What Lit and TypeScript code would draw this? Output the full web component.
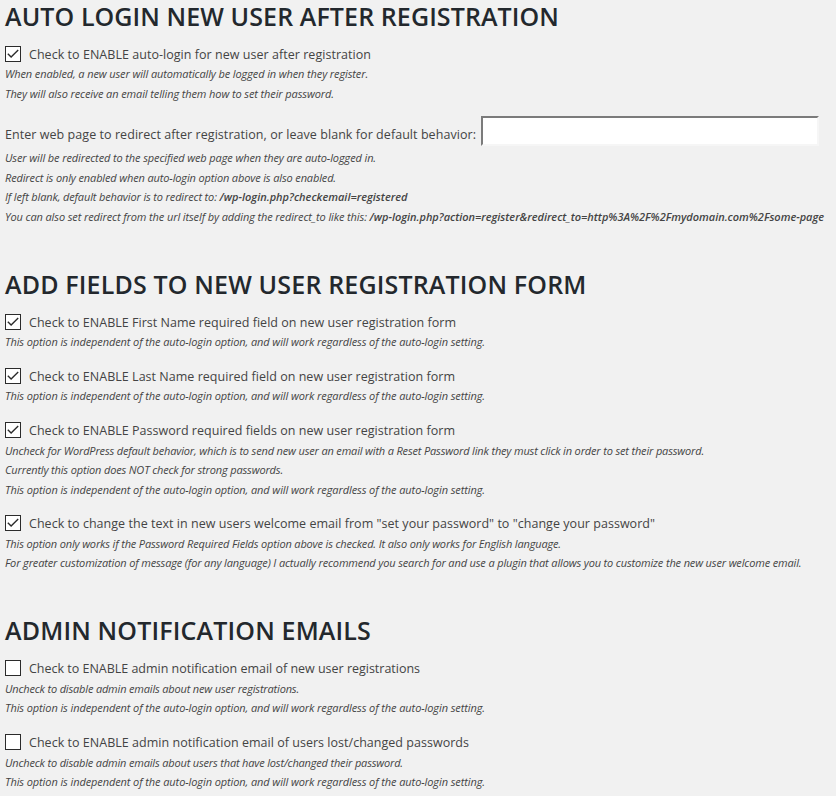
import { LitElement, html, css, svg, nothing } from "lit";
import { customElement, property } from "lit/decorators.js";
import { styleMap } from "lit/directives/style-map.js";

type Line = { text: string; width: number; strong?: string; strongWidth?: number };
type Option = { label: Line; checked?: boolean; input?: boolean; notes: Line[] };
type Section = { title: Line; options: Option[] };

const line = (text: string, width: number, strong?: string, strongWidth?: number): Line => ({
  text, width, strong, strongWidth,
});

const independent = line(
  "This option is independent of the auto-login option, and will work regardless of the auto-login setting.", 480);

const sections: Section[] = [
  {
    title: line("AUTO LOGIN NEW USER AFTER REGISTRATION", 554),
    options: [
      {
        label: line("Check to ENABLE auto-login for new user after registration", 342),
        checked: true,
        notes: [
          line("When enabled, a new user will automatically be logged in when they register.", 363),
          line("They will also receive an email telling them how to set their password.", 329),
        ],
      },
      {
        label: line("Enter web page to redirect after registration, or leave blank for default behavior:", 471),
        input: true,
        notes: [
          line("User will be redirected to the specified web page when they are auto-logged in.", 371),
          line("Redirect is only enabled when auto-login option above is also enabled.", 331),
          line("If left blank, default behavior is to redirect to: ", 214.5, "/wp-login.php?checkemail=registered", 188),
          line("You can also set redirect from the url itself by adding the redirect_to like this: ", 364.5,
            "/wp-login.php?action=register&redirect_to=http%3A%2F%2Fmydomain.com%2Fsome-page", 454.5),
        ],
      },
    ],
  },
  {
    title: line("ADD FIELDS TO NEW USER REGISTRATION FORM", 581.5),
    options: [
      {
        label: line("Check to ENABLE First Name required field on new user registration form", 427),
        checked: true,
        notes: [independent],
      },
      {
        label: line("Check to ENABLE Last Name required field on new user registration form", 426),
        checked: true,
        notes: [independent],
      },
      {
        label: line("Check to ENABLE Password required fields on new user registration form", 426),
        checked: true,
        notes: [
          line("Uncheck for WordPress default behavior, which is to send new user an email with a Reset Password link they must click in order to set their password.", 699),
          line("Currently this option does NOT check for strong passwords.", 278),
          independent,
        ],
      },
      {
        label: line('Check to change the text in new users welcome email from "set your password" to "change your password"', 626),
        checked: true,
        notes: [
          line("This option only works if the Password Required Fields option above is checked. It also only works for English language.", 556),
          line("For greater customization of message (for any language) I actually recommend you search for and use a plugin that allows you to customize the new user welcome email.", 796.5),
        ],
      },
    ],
  },
  {
    title: line("ADMIN NOTIFICATION EMAILS", 366),
    options: [
      {
        label: line("Check to ENABLE admin notification email of new user registrations", 391),
        notes: [line("Uncheck to disable admin emails about new user registrations.", 294), independent],
      },
      {
        label: line("Check to ENABLE admin notification email of users lost/changed passwords", 440),
        notes: [line("Uncheck to disable admin emails about users that have lost/changed their password.", 398), independent],
      },
    ],
  },
];

const fonts = {
  title: '600 25px "Open Sans"',
  label: '12.5px "Open Sans"',
  note: 'italic 11px "Open Sans"',
  strong: 'italic 600 11px "Open Sans"',
};

const ruler = document.createElement("canvas").getContext("2d")!;

// Tracks a run of text so that it fills the given width.
function fitted(text: string, width: number, font: string) {
  ruler.font = font;
  const spacing = (width - ruler.measureText(text).width) / text.length;
  return html`<span style=${styleMap({ letterSpacing: `${spacing.toFixed(3)}px` })}>${text}</span>`;
}

@customElement("check-box")
export class CheckBox extends LitElement {
  @property({ type: Boolean }) checked = false;

  static styles = css`
    :host { display: block; flex: none; width: 16px; height: 16px; }
    svg { display: block; }
    .frame { fill: #fff; stroke: #2b2b2b; stroke-width: 1; }
    .tick { fill: none; stroke: #2b2b2b; stroke-width: 1.35; }
  `;

  render() {
    return html`<svg width="16" height="16" viewBox="0 0 16 16">
      <rect class="frame" x="0.5" y="0.5" width="15" height="15"></rect>
      ${this.checked ? svg`<path class="tick" d="M2.8 7.8 L6.1 11.1 L13.2 4"></path>` : nothing}
    </svg>`;
  }
}

@customElement("app-root")
export class AppRoot extends LitElement {
  static styles = css`
    :host {
      display: block;
      box-sizing: border-box;
      height: 100vh;
      overflow: hidden;
      padding: 0 5px;
      background: #f1f1f1;
      color: #444;
      font-family: "Open Sans", "Noto Sans", sans-serif;
    }
    span { white-space: pre; }
    section { margin-bottom: 41.6px; }
    h2 {
      margin: 0 0 12px;
      color: #23282d;
      font-size: 25px;
      font-weight: 600;
      line-height: 32px;
    }
    .options { display: flex; flex-direction: column; gap: 14.41px; }
    .row {
      display: flex;
      align-items: center;
      gap: 8px;
      height: 20px;
      font-size: 12.5px;
      line-height: 20px;
    }
    .row label { padding-top: 2px; }
    .field { align-items: flex-start; gap: 5px; height: 32px; margin-top: -1.5px; }
    .field label { padding-top: 9px; }
    input {
      box-sizing: border-box;
      width: 338px;
      height: 30px;
      margin: 0;
      padding: 2px 4px;
      border: 2px solid;
      border-color: #7b7b7b #f6f6f6 #f6f6f6 #7b7b7b;
      border-radius: 0;
      background: #fff;
      font: inherit;
      outline: none;
    }
    .notes { padding-top: 0.25px; font-size: 11px; font-style: italic; line-height: 19.5px; white-space: nowrap; }
    section:last-of-type .notes { padding-top: 0.5px; }
    strong { font-weight: 600; }
  `;

  private note(n: Line) {
    return html`<div>${fitted(n.text, n.width, fonts.note)}${n.strong
      ? html`<strong>${fitted(n.strong, n.strongWidth!, fonts.strong)}</strong>` : nothing}</div>`;
  }

  private option(o: Option) {
    const label = html`<label>${fitted(o.label.text, o.label.width, fonts.label)}</label>`;
    return html`<div>
      ${o.input
        ? html`<div class="row field">${label}<input type="text" /></div>`
        : html`<div class="row"><check-box ?checked=${o.checked}></check-box>${label}</div>`}
      <div class="notes">${o.notes.map((n) => this.note(n))}</div>
    </div>`;
  }

  render() {
    return sections.map((s) => html`<section>
      <h2>${fitted(s.title.text, s.title.width, fonts.title)}</h2>
      <div class="options">${s.options.map((o) => this.option(o))}</div>
    </section>`);
  }
}
